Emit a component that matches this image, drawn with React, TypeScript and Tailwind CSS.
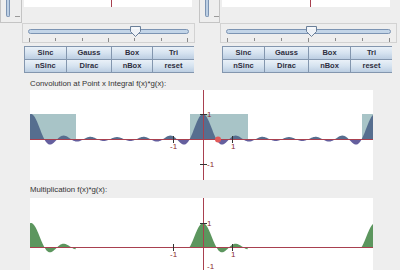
import React from 'react'

const N = 13
const PERIOD = 172

// periodic sinc (dirichlet kernel), dx in px from origin
const dirichlet = (dx: number) => {
  const t = dx / PERIOD
  const s = Math.sin(Math.PI * t)
  if (Math.abs(s) < 1e-6) return 1
  return Math.sin(N * Math.PI * t) / (N * s)
}

// box of width 58 starting 13px left of origin, repeated every period
const box = (dx: number) => {
  const m = (((dx + 13) % PERIOD) + PERIOD) % PERIOD
  return m < 58 ? 1 : 0
}

const W = 343
const OX = 173

const areaPath = (fn: (dx: number) => number, oy: number, sy: number) => {
  let d = `M0 ${oy}`
  for (let px = 0; px <= W; px += 0.5) {
    d += ` L${px} ${(oy - fn(px - OX) * sy).toFixed(2)}`
  }
  return d + ` L${W} ${oy} Z`
}

interface SliderProps {
  thumb: number
  width: string
}

const HSlider: React.FC<SliderProps> = ({ thumb, width }) => (
  <div className={`relative h-[20px] border border-[#d2d2d2] ${width}`}>
    <div className="mx-[5px] mt-[5px] h-[5px] rounded-full border border-[#7c94b3] bg-[#c3d5e8]" />
    <div className="mx-[6px] mt-[4px] flex justify-between">
      {[0, 1, 2, 3, 4, 5, 6].map((i) => (
        <div key={i} className={`w-px bg-[#8a8a8a] ${i % 3 === 0 ? 'h-[4px]' : 'h-[3px]'}`} />
      ))}
    </div>
    <svg className="absolute top-[2px]" style={{ left: thumb - 5 }} width="11" height="11" viewBox="0 0 11 11">
      <path d="M0.5 0.5 H10.5 V5.5 L5.5 10.5 L0.5 5.5 Z" fill="#eef2f7" stroke="#6a7f99" />
      <path d="M2 2 H9" stroke="#ffffff" />
    </svg>
  </div>
)

const VSlider: React.FC<{ width: string }> = ({ width }) => (
  <div className={`flex h-[23px] border-x border-b border-[#c4c4c4] pl-[5px] ${width}`}>
    <div className="h-[17px] w-[4px] rounded-b-full border-x border-b border-[#7c94b3] bg-[#bccfe4]" />
    <div className="ml-[5px] mt-[16px] h-px w-[5px] bg-[#9a9a9a]" />
  </div>
)

const labels = ['Sinc', 'Gauss', 'Box', 'Tri', 'nSinc', 'Dirac', 'nBox', 'reset']

const Buttons: React.FC<{ cols: string }> = ({ cols }) => (
  <div className={`grid w-[170px] gap-px bg-[#8396ae] p-px ${cols}`}>
    {labels.map((l) => (
      <button
        key={l}
        className="h-[12px] bg-linear-to-b from-[#eaf1f8] via-[#d6e3f0] to-[#bccee2] text-[7.5px] font-bold leading-[12px] text-[#2e2e40]"
      >
        {l}
      </button>
    ))}
  </div>
)

const Chart: React.FC<{ mode: 'conv' | 'mult'; height: number; oy: number; sy: number }> = ({
  mode,
  height,
  oy,
  sy,
}) => {
  const id = mode
  const boxes = [-2, -1, 0, 1, 2].map((k) => OX - 13 + PERIOD * k)
  const tick = 'stroke-[#333333]'
  const lowLabel = Math.min(oy + sy + 3, height - 1)
  return (
    <svg width={W} height={height} className="block bg-white">
      <defs>
        <clipPath id={`${id}-up`}>
          <rect x="0" y="0" width={W} height={oy} />
        </clipPath>
        <clipPath id={`${id}-down`}>
          <rect x="0" y={oy} width={W} height={height - oy} />
        </clipPath>
      </defs>
      {mode === 'conv' ? (
        <>
          {boxes.map((x) => (
            <rect key={x} x={x} y={oy - sy} width={58} height={sy} fill="#a8c4c7" />
          ))}
          <path d={areaPath(dirichlet, oy, sy)} fill="#566e8f" clipPath={`url(#${id}-up)`} />
          <path d={areaPath(dirichlet, oy, sy)} fill="#655f9e" clipPath={`url(#${id}-down)`} />
        </>
      ) : (
        <path d={areaPath((dx) => dirichlet(dx) * box(dx), oy, sy)} fill="#5c965e" />
      )}
      <line x1="0" y1={oy + 0.5} x2={W} y2={oy + 0.5} stroke="#a8404f" />
      <line x1={OX + 0.5} y1="0" x2={OX + 0.5} y2={height} stroke="#a8404f" />
      <line x1={OX + 29.5} y1={oy - 3} x2={OX + 29.5} y2={oy + 4} className={tick} />
      <line x1={OX - 29.5} y1={oy - 3} x2={OX - 29.5} y2={oy + 4} className={tick} />
      <line x1={OX - 3} y1={oy - sy + 0.5} x2={OX + 4} y2={oy - sy + 0.5} className={tick} />
      <line x1={OX - 3} y1={oy + sy + 0.5} x2={OX + 4} y2={oy + sy + 0.5} className={tick} />
      <g fill="#8a2a30" fontSize="8" fontFamily="'Liberation Sans', Arial, sans-serif">
        <text x={OX + 28} y={oy + 10}>1</text>
        <text x={OX - 33} y={oy + 10}>-1</text>
        <text x={OX + 4} y={oy - sy + 3}>1</text>
        <text x={OX + 4} y={lowLabel}>-1</text>
      </g>
      {mode === 'conv' && <circle cx={OX + 15} cy={oy + 0.5} r="3" fill="#e25a5a" />}
    </svg>
  )
}

export default function App() {
  return (
    <div className="h-[270px] w-[400px] overflow-hidden bg-[#eeeeee] font-['Liberation_Sans',Arial,sans-serif] text-[#333333]">
      <div className="flex h-[77px]">
        {/* left panel */}
        <div className="w-[199px]">
          <div className="flex">
            <VSlider width="w-[22px]" />
            <div className="relative ml-[2px] h-[7px] w-[168px] bg-white">
              <div className="absolute left-[87px] top-0 h-full w-px bg-[#a8404f]" />
            </div>
          </div>
          <div className="ml-[22px]">
            <HSlider thumb={112} width="w-[173px]" />
          </div>
          <div className="ml-[24px] mt-[3px]">
            <Buttons cols="grid-cols-[41px_44px_40px_41px]" />
          </div>
        </div>
        {/* right panel */}
        <div className="w-[201px]">
          <div className="flex">
            <VSlider width="w-[21px]" />
            <div className="relative ml-[2px] h-[7px] w-[168px] bg-white">
              <div className="absolute left-[88px] top-0 h-full w-px bg-[#a8404f]" />
            </div>
          </div>
          <div className="ml-[21px]">
            <HSlider thumb={90} width="w-[177px]" />
          </div>
          <div className="ml-[23px] mt-[3px]">
            <Buttons cols="grid-cols-[41px_43px_41px_41px]" />
          </div>
        </div>
      </div>
      <div className="ml-[30px] w-[343px]">
        <div className="h-[13px] pt-[2px] text-[7.8px] leading-[10px]">Convolution at Point x Integral f(x)*g(x):</div>
        <Chart mode="conv" height={90} oy={49} sy={25} />
        <div className="h-[18px] pt-[5px] text-[7.8px] leading-[10px]">Multiplication f(x)*g(x):</div>
        <Chart mode="mult" height={72} oy={49} sy={24} />
      </div>
    </div>
  )
}
